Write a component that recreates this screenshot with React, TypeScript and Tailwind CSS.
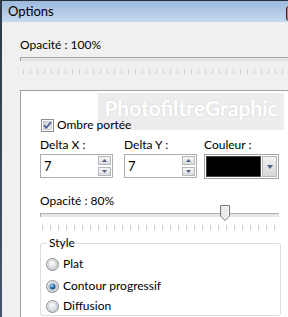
import React from "react";

function Checkbox() {
  return (
    <svg width="13" height="13" viewBox="0 0 13 13">
      <defs>
        <linearGradient id="cbg" x1="0" y1="0" x2="1" y2="1">
          <stop offset="0" stopColor="#cbcfd5" />
          <stop offset="1" stopColor="#f6f6f6" />
        </linearGradient>
      </defs>
      <rect x="0.5" y="0.5" width="12" height="12" fill="#fff" stroke="#8f8f8f" />
      <rect x="2.5" y="2.5" width="8" height="8" fill="url(#cbg)" stroke="#a8aeb7" strokeWidth="0.6" />
      <path d="M3.2 6.4 L5.4 8.8 L9.8 3.2" fill="none" stroke="#4a5f97" strokeWidth="1.8" strokeLinejoin="round" />
    </svg>
  );
}

function Radio({ checked }: { checked?: boolean }) {
  return (
    <svg width="13" height="13" viewBox="0 0 13 13">
      <defs>
        <radialGradient id="rbg" cx="0.4" cy="0.3" r="0.8">
          <stop offset="0" stopColor="#fdfdfd" />
          <stop offset="1" stopColor="#c9ccd1" />
        </radialGradient>
        <radialGradient id="rdot" cx="0.4" cy="0.35" r="0.7">
          <stop offset="0" stopColor="#b6e1f8" />
          <stop offset="0.5" stopColor="#2f7cb5" />
          <stop offset="1" stopColor="#123b61" />
        </radialGradient>
      </defs>
      <circle cx="6.5" cy="6.5" r="6" fill="url(#rbg)" stroke="#8a8d90" />
      <circle cx="6.5" cy="6.5" r="4.2" fill="none" stroke="#c3c7cc" strokeWidth="0.8" />
      {checked && <circle cx="6.5" cy="6.5" r="3" fill="url(#rdot)" />}
    </svg>
  );
}

function Spin({ value }: { value: string }) {
  return (
    <div className="flex w-[73px] h-[24px] bg-white border border-[#abadb3]">
      <div className="flex-1 pl-[3px] text-[13px] leading-[22px] text-black">{value}</div>
      <div className="flex flex-col justify-center gap-[2px] pr-[1px]">
        <div className="w-[13px] h-[9px] border border-[#b5b8bd] bg-gradient-to-b from-[#f5f5f5] to-[#dcdcdc] flex items-center justify-center">
          <svg width="5" height="3" viewBox="0 0 5 3"><path d="M0 3 L2.5 0 L5 3 Z" fill="#4d6185" /></svg>
        </div>
        <div className="w-[13px] h-[9px] border border-[#b5b8bd] bg-gradient-to-b from-[#f5f5f5] to-[#dcdcdc] flex items-center justify-center">
          <svg width="5" height="3" viewBox="0 0 5 3"><path d="M0 0 L2.5 3 L5 0 Z" fill="#4d6185" /></svg>
        </div>
      </div>
    </div>
  );
}

function Ticks({ count, step, color = "#c4c4c4" }: { count: number; step: number; color?: string }) {
  return (
    <div className="flex h-[5px]">
      {Array.from({ length: count }).map((_, i) => (
        <div key={i} className="h-full w-[1px] shrink-0" style={{ background: color, marginRight: step - 1 }} />
      ))}
    </div>
  );
}

export default function App() {
  return (
    <div className="w-[288px] h-[317px] overflow-hidden bg-[#f0f0f0] flex font-['Lato',sans-serif] text-black">
      <div className="w-[2px] h-full bg-gradient-to-b from-[#2e3947] to-[#44566c] shrink-0" />
      <div className="flex-1 flex flex-col relative min-w-0">
        <div className="h-[1px] bg-[#27303c]" />
        <div className="h-[21px] bg-gradient-to-b from-[#9dbadd] to-[#c6d9ef] flex items-center pl-[6px] text-[13px] relative">
          Options
          <div className="absolute left-[284px] top-[5px] w-[12px] h-[15px] border border-[#4c1f1f] rounded-[3px] bg-[#c97c6c]" />
        </div>
        <div className="flex-1 flex flex-col pl-[18px]">
          <div className="mt-[15px] text-[12px] leading-[16px]">Opacité : 100%</div>
          <div className="mt-[4px] h-[4px] border-t border-l border-[#a9a9a9] bg-[#e4e4e4]" />
          <div className="mt-[8px] pl-[3px]">
            <Ticks count={40} step={7} color="#cfcfcf" />
          </div>
          <div className="mt-[16px] flex-1 bg-white border-t border-l border-[#a0a0a0] pl-[19px] flex flex-col relative">
            <div className="absolute left-[77px] top-[2px] w-[186px] h-[37px] bg-[#ededed] flex justify-center items-start pt-[6px]">
              <span className="text-[21px] leading-[17px] font-bold text-white [text-shadow:0_0_2px_#d0d0d0]">PhotofiltreGraphic</span>
            </div>
            <div className="mt-[27px] flex items-center h-[14px] relative">
              <div className="ml-[1px]"><Checkbox /></div>
              <span className="ml-[3px] text-[12px] leading-[14px]">Ombre portée</span>
            </div>
            <div className="mt-[5px] flex text-[12px] leading-[16px]">
              <div className="w-[84px]">
                <div>Delta X :</div>
                <div className="mt-[1px]"><Spin value="7" /></div>
              </div>
              <div className="w-[80px]">
                <div>Delta Y :</div>
                <div className="mt-[1px]"><Spin value="7" /></div>
              </div>
              <div>
                <div>Couleur :</div>
                <div className="mt-[1px] w-[75px] h-[25px] border border-[#a5a5a5] bg-white p-[1px] flex">
                  <div className="flex-1 bg-black border border-[#444]" />
                  <div className="ml-[1px] w-[15px] border border-[#b5b8bd] bg-gradient-to-b from-[#f2f2f2] to-[#d6d6d6] flex items-center justify-center">
                    <svg width="6" height="4" viewBox="0 0 6 4"><path d="M0 0 L3 4 L6 0 Z" fill="#4d6185" /></svg>
                  </div>
                </div>
              </div>
            </div>
            <div className="mt-[14px] text-[12px] leading-[16px]">Opacité : 80%</div>
            <div className="relative w-[239px] h-[14px]">
              <div className="absolute left-0 right-0 top-[4px] h-[4px] border-t border-l border-[#b0b0b0] bg-[#e6e6e6]" />
              <svg className="absolute left-[180px] top-[-4px]" width="10" height="16" viewBox="0 0 10 16">
                <path d="M0.5 0.5 H9.5 V11 L5 15.5 L0.5 11 Z" fill="#eaeaea" stroke="#787878" />
                <path d="M1.5 1.5 H8.5 V10.5 L5 14" fill="none" stroke="#ffffff" strokeWidth="0.8" />
              </svg>
            </div>
            <div className="mt-[2px] pl-[2px] flex">
              <Ticks count={30} step={8} color="#c9c9c9" />
            </div>
            <div className="mt-[13px] w-[241px] flex-1 border border-[#d5dfe5] rounded-[3px] relative pl-[5px] pt-[10px] mb-[1px]">
              <div className="absolute left-[6px] top-[-9px] bg-white px-[2px] text-[12px] leading-[16px]">Style</div>
              <div className="flex items-center h-[16px] mt-[2px]">
                <Radio />
                <span className="ml-[4px] text-[12px] leading-[16px]">Plat</span>
              </div>
              <div className="flex items-center h-[16px] mt-[6px]">
                <Radio checked />
                <span className="ml-[4px] text-[12px] leading-[16px]">Contour progressif</span>
              </div>
              <div className="flex items-center h-[16px] mt-[4px]">
                <Radio />
                <span className="ml-[4px] text-[12px] leading-[16px]">Diffusion</span>
              </div>
            </div>
          </div>
        </div>
      </div>
    </div>
  );
}
